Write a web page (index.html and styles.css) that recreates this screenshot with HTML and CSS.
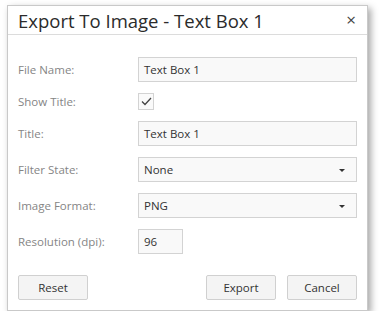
FILE: index.html
```html
<!DOCTYPE html>
<html>
<head>
<meta charset="utf-8">
<link rel="stylesheet" href="styles.css">
</head>
<body>
<div class="dialog">
  <div class="header">
    <span class="title">Export To Image - Text Box 1</span>
    <span class="close">×</span>
  </div>
  <div class="body">
    <div class="form">
      <label class="lbl">File Name:</label>
      <div class="input">Text Box 1</div>
      <label class="lbl">Show Title:</label>
      <div class="checkbox"><svg width="11" height="9" viewBox="0 0 11 9"><path d="M1 4.5 L4 7.5 L10 1" fill="none" stroke="#444" stroke-width="1.3"/></svg></div>
      <label class="lbl">Title:</label>
      <div class="input">Text Box 1</div>
      <label class="lbl">Filter State:</label>
      <div class="input select">None<span class="arrow"></span></div>
      <label class="lbl">Image Format:</label>
      <div class="input select">PNG<span class="arrow"></span></div>
      <label class="lbl">Resolution (dpi):</label>
      <div class="input small">96</div>
    </div>
    <div class="footer">
      <button class="btn">Reset</button>
      <div class="right">
        <button class="btn">Export</button>
        <button class="btn">Cancel</button>
      </div>
    </div>
  </div>
</div>
</body>
</html>
```
FILE: styles.css
```css
html, body { margin: 0; padding: 0; background: #fff; }
body { font-family: "Open Sans", "Noto Sans", sans-serif; }
.dialog {
  margin: 5px 0 0 7px;
  width: 361px;
  height: 306px;
  box-sizing: border-box;
  border: 1px solid #c9c9c9;
  background: #fff;
  box-shadow: 3px 3px 7px rgba(0,0,0,0.35);
}
.header {
  height: 28px;
  border-bottom: 1px solid #dcdcdc;
  display: flex;
  align-items: center;
  justify-content: space-between;
  padding: 0 11px 0 10px;
}
.title { font-size: 18.5px; color: #2b2b2b; }
.close { font-size: 17px; color: #444; line-height: 1; margin-top: -2px; }
.body { padding: 22px 10px 10px 10px; }
.form {
  display: grid;
  grid-template-columns: 120px 1fr;
  row-gap: 11px;
  align-items: center;
}
.lbl { font-size: 11.5px; color: #858585; }
.input {
  height: 25px;
  box-sizing: border-box;
  border: 1px solid #d3d3d3;
  background: #f9f9f9;
  font-size: 11.5px;
  color: #333;
  padding: 0 5px;
  display: flex;
  align-items: center;
  position: relative;
}
.input.small { width: 45px; }
.arrow {
  position: absolute;
  right: 11px;
  top: 11px;
  width: 0; height: 0;
  border-left: 3px solid transparent;
  border-right: 3px solid transparent;
  border-top: 3px solid #333;
}
.checkbox {
  width: 16px; height: 17px;
  box-sizing: border-box;
  border: 1px solid #d3d3d3;
  background: #fafafa;
  display: flex; align-items: center; justify-content: center;
}
.footer {
  margin-top: 21px;
  display: flex;
  justify-content: space-between;
}
.right { display: flex; gap: 11px; }
.btn {
  width: 70px; height: 25px;
  border: 1px solid #d0d0d0;
  border-radius: 2px;
  background: #f4f4f4;
  font-family: "Open Sans", "Noto Sans", sans-serif;
  font-size: 11.5px;
  color: #333;
  padding: 0;
}
```
